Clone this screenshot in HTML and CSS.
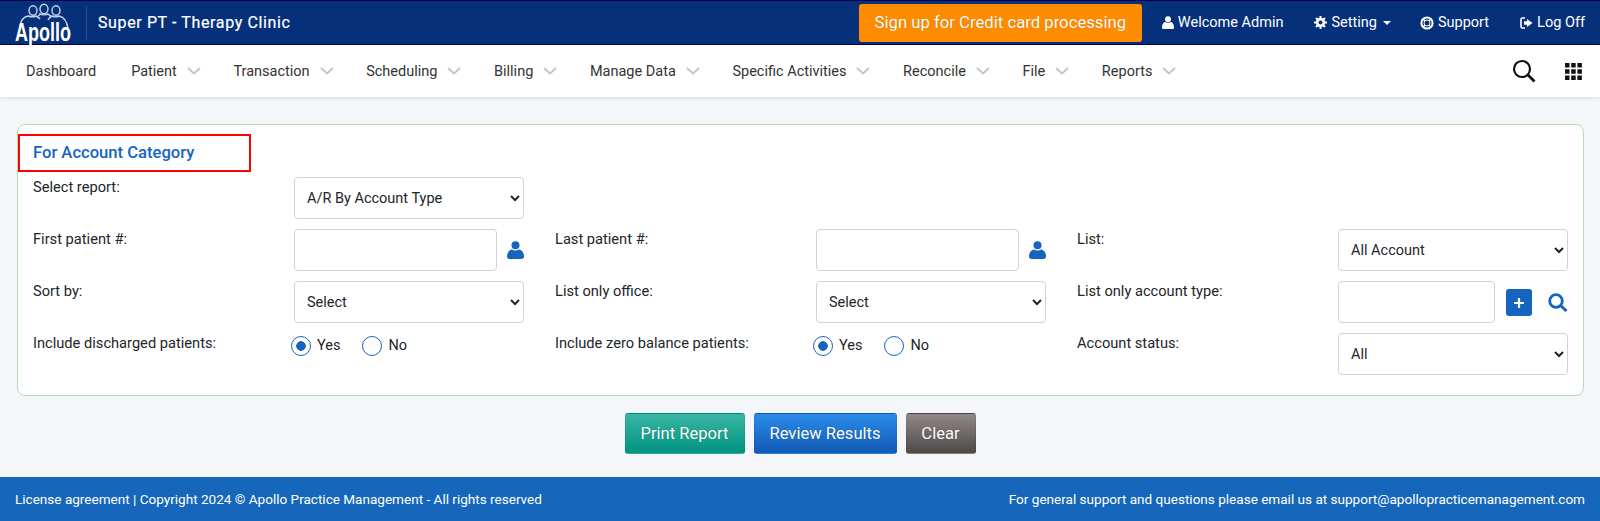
FILE: index.html
```html
<!DOCTYPE html>
<html lang="en">
<head>
<meta charset="utf-8">
<title>For Account Category</title>
<link rel="stylesheet" href="styles.css">
</head>
<body>
<header class="topbar">
  <div class="brand">
    <svg class="logo" width="58" height="43" viewBox="0 0 58 43">
      <g fill="none" stroke="#c9d6ea" stroke-width="1.4">
        <ellipse cx="18" cy="9.500" rx="4" ry="4.800"/>
        <ellipse cx="29" cy="8" rx="4" ry="4.800"/>
        <ellipse cx="41" cy="9.500" rx="4" ry="4.800"/>
        <path d="M5 28c0-8 3-12 8-13 3 1 6 1 8 0 2 1 3 2 4 3"/>
        <path d="M23 15c2-1 2-2 2-2 2 1 6 1 8 0 1 1 2 2 3 2"/>
        <path d="M33 19c1-2 2-3 4-4 2 1 5 1 7 0 5 1 8 5 9 13"/>
      </g>
      <text class="logo-text" x="0" y="40" textLength="56" lengthAdjust="spacingAndGlyphs">Apollo</text>
    </svg>
    <span class="clinic">Super PT - Therapy Clinic</span>
  </div>
  <div class="top-actions">
    <a class="cta">Sign up for Credit card processing</a>
    <a class="top-link top-welcome">
      <svg width="12" height="13" viewBox="0 0 12 13"><circle cx="6" cy="3.200" r="3" fill="#fff"/><path d="M1 13c-1 0-1-1-1-2 0-3 2-5 3-5 1 1 5 1 6 0 1 0 3 2 3 5 0 1 0 2-1 2z" fill="#fff"/></svg>
      Welcome Admin</a>
    <a class="top-link top-setting">
      <svg width="13" height="13" viewBox="0 0 13 13"><circle cx="6.500" cy="6.500" r="3.400" fill="none" stroke="#fff" stroke-width="2.600"/><path d="M6.500 0v13M0 6.500h13M2 2l9 9M11 2l-9 9" stroke="#fff" stroke-width="2"/><circle cx="6.500" cy="6.500" r="2" fill="#06317a"/></svg>
      Setting<span class="caret"></span></a>
    <a class="top-link top-support">
      <svg width="14" height="14" viewBox="0 0 14 14"><circle cx="7" cy="7" r="5.600" fill="none" stroke="#fff" stroke-width="2"/><circle cx="7" cy="7" r="3" fill="none" stroke="#fff" stroke-width="1"/><path d="M3 3l2 2M11 3L9 5M3 11l2-2M11 11L9 9" stroke="#fff" stroke-width="1.500"/></svg>
      Support</a>
    <a class="top-link top-logoff">
      <svg width="13" height="12" viewBox="0 0 13 12"><path d="M5 1H2.500C1.500 1 1 1.700 1 2.500v7C1 10.300 1.500 11 2.500 11H5" fill="none" stroke="#fff" stroke-width="1.600"/><path d="M7 2l5.500 4L7 10V7.700H4V4.300h3z" fill="#fff"/></svg>
      Log Off</a>
  </div>
</header>

<nav class="mainnav">
  <ul class="menu">
    <li class="menu-plain">Dashboard</li>
    <li>Patient<svg class="chev" width="14" height="8" viewBox="0 0 14 8"><path d="M1 1l6 5.500L13 1" /></svg></li>
    <li>Transaction<svg class="chev" width="14" height="8" viewBox="0 0 14 8"><path d="M1 1l6 5.500L13 1" /></svg></li>
    <li>Scheduling<svg class="chev" width="14" height="8" viewBox="0 0 14 8"><path d="M1 1l6 5.500L13 1" /></svg></li>
    <li>Billing<svg class="chev" width="14" height="8" viewBox="0 0 14 8"><path d="M1 1l6 5.500L13 1" /></svg></li>
    <li>Manage Data<svg class="chev" width="14" height="8" viewBox="0 0 14 8"><path d="M1 1l6 5.500L13 1" /></svg></li>
    <li>Specific Activities<svg class="chev" width="14" height="8" viewBox="0 0 14 8"><path d="M1 1l6 5.500L13 1" /></svg></li>
    <li>Reconcile<svg class="chev" width="14" height="8" viewBox="0 0 14 8"><path d="M1 1l6 5.500L13 1" /></svg></li>
    <li>File<svg class="chev" width="14" height="8" viewBox="0 0 14 8"><path d="M1 1l6 5.500L13 1" /></svg></li>
    <li>Reports<svg class="chev" width="14" height="8" viewBox="0 0 14 8"><path d="M1 1l6 5.500L13 1" /></svg></li>
  </ul>
  <div class="nav-tools">
    <svg width="24" height="24" viewBox="0 0 24 24"><circle cx="10" cy="10" r="8" fill="none" stroke="#111" stroke-width="2.200"/><path d="M16 16l6.500 6.500" stroke="#111" stroke-width="2.800"/></svg>
    <svg class="grid-icon" width="17" height="17" viewBox="0 0 17 17"><path fill="#111" d="M0 0h4.500v4.500H0zM6.200 0h4.500v4.500H6.200zM12.400 0h4.500v4.500h-4.500zM0 6.200h4.500v4.500H0zM6.200 6.200h4.500v4.500H6.200zM12.400 6.200h4.500v4.500h-4.500zM0 12.400h4.500v4.500H0zM6.200 12.400h4.500v4.500H6.200zM12.400 12.400h4.500v4.500h-4.500z"/></svg>
  </div>
</nav>

<main class="content">
  <section class="card">
    <h2 class="card-title">For Account Category</h2>
    <form class="form-grid">
      <label class="lbl">Select report:</label>
      <div class="ctl"><select class="field"><option>A/R By Account Type</option></select></div>
      <span class="empty"></span><span class="empty"></span><span class="empty"></span><span class="empty"></span>

      <label class="lbl">First patient #:</label>
      <div class="ctl">
        <input class="field field-person" type="text">
        <svg class="person" width="17" height="18" viewBox="0 0 17 18"><circle cx="8.500" cy="4.200" r="4" fill="#1565c0"/><path d="M0 15.500C0 11 3 8.500 5 8.500c2 1.200 5 1.200 7 0 2 0 5 2.500 5 7 0 1.500-1 2.500-2.500 2.500h-12C1 18 0 17 0 15.500z" fill="#1565c0"/></svg>
      </div>
      <label class="lbl">Last patient #:</label>
      <div class="ctl">
        <input class="field field-person" type="text">
        <svg class="person" width="17" height="18" viewBox="0 0 17 18"><circle cx="8.500" cy="4.200" r="4" fill="#1565c0"/><path d="M0 15.500C0 11 3 8.500 5 8.500c2 1.200 5 1.200 7 0 2 0 5 2.500 5 7 0 1.500-1 2.500-2.500 2.500h-12C1 18 0 17 0 15.500z" fill="#1565c0"/></svg>
      </div>
      <label class="lbl">List:</label>
      <div class="ctl"><select class="field"><option>All Account</option></select></div>

      <label class="lbl">Sort by:</label>
      <div class="ctl"><select class="field"><option>Select</option></select></div>
      <label class="lbl">List only office:</label>
      <div class="ctl"><select class="field"><option>Select</option></select></div>
      <label class="lbl">List only account type:</label>
      <div class="ctl">
        <input class="field field-type" type="text">
        <button class="plus" type="button"><svg width="12" height="12" viewBox="0 0 12 12"><path d="M6 1v10M1 6h10" stroke="#fff" stroke-width="2.200"/></svg></button>
        <svg class="find" width="20" height="19" viewBox="0 0 20 19"><circle cx="8" cy="8" r="6.300" fill="none" stroke="#1565c0" stroke-width="2.800"/><path d="M12.500 12.500l6 5.500" stroke="#1565c0" stroke-width="3"/></svg>
      </div>

      <label class="lbl">Include discharged patients:</label>
      <div class="ctl radios">
        <label class="radio"><input type="radio" name="dis" checked>Yes</label>
        <label class="radio"><input type="radio" name="dis">No</label>
      </div>
      <label class="lbl">Include zero balance patients:</label>
      <div class="ctl radios">
        <label class="radio"><input type="radio" name="zero" checked>Yes</label>
        <label class="radio"><input type="radio" name="zero">No</label>
      </div>
      <label class="lbl">Account status:</label>
      <div class="ctl"><select class="field"><option>All</option></select></div>
    </form>
  </section>
  <div class="actions">
    <button class="btn btn-print" type="button">Print Report</button>
    <button class="btn btn-review" type="button">Review Results</button>
    <button class="btn btn-clear" type="button">Clear</button>
  </div>
</main>

<footer class="footer">
  <span>License agreement | Copyright 2024 © Apollo Practice Management - All rights reserved</span>
  <span>For general support and questions please email us at support@apollopracticemanagement.com</span>
</footer>
</body>
</html>
```
FILE: styles.css
```css
* { box-sizing: border-box; }
html, body { margin: 0; padding: 0; }
body {
  background: #f4f6f9;
  font-family: Roboto, "Liberation Sans", sans-serif;
  font-size: 14px;
  color: #212529;
  height: 521px;
  overflow: hidden;
}

/* top bar */
.topbar {
  height: 45px;
  background: #06317a;
  border-top: 1px solid #00004d;
  border-bottom: 1px solid #00004d;
  display: flex;
  align-items: center;
  justify-content: space-between;
}
.brand { display: flex; align-items: center; padding-left: 15px; }
.logo { display: block; overflow: visible; }
.logo-text {
  font-family: "Liberation Sans", sans-serif;
  font-weight: 700;
  font-size: 25px;
  fill: #fff;
}
.clinic {
  margin-left: 13px;
  padding-left: 11px;
  border-left: 1px solid #2a4f8e;
  height: 34px;
  line-height: 33px;
  color: #fff;
  font-size: 16px;
  letter-spacing: 0.62px;
  -webkit-text-stroke: 0.2px #fff;
}
.top-actions { display: flex; align-items: center; height: 100%; }
.cta {
  width: 283px;
  height: 38px;
  line-height: 38px;
  text-align: center;
  background: #ff8c00;
  border-radius: 3px;
  color: #fff;
  font-size: 16.7px;
  text-shadow: 0 0 1px rgba(0,0,0,.3);
}
.top-link {
  display: flex;
  align-items: center;
  gap: 4px;
  color: #fff;
  font-size: 14.5px;
  white-space: nowrap;
}
.top-welcome { margin-left: 20px; }
.top-setting { margin-left: 31px; }
.top-support { margin-left: 29px; }
.top-logoff { margin-left: 31px; margin-right: 15px; }
.caret {
  width: 0;
  height: 0;
  margin-left: 2px;
  border-left: 4px solid transparent;
  border-right: 4px solid transparent;
  border-top: 4px solid #fff;
}

/* main nav */
.mainnav {
  height: 52px;
  background: #fff;
  box-shadow: 0 1px 4px rgba(0,0,0,.12);
  display: flex;
  align-items: center;
  justify-content: space-between;
  padding: 0 18px 0 26px;
}
.menu {
  list-style: none;
  margin: 0;
  padding: 0;
  display: flex;
  align-items: center;
  font-size: 14.5px;
  color: #333;
}
.menu li { display: flex; align-items: center; margin-right: 32.6px; white-space: nowrap; }
.menu .menu-plain { margin-right: 35px; }
.chev { margin-left: 10px; fill: none; stroke: #c6c6be; stroke-width: 2; }
.nav-tools { display: flex; align-items: center; gap: 29px; }
.grid-icon { display: block; }

/* card */
.content { padding: 27px 16px 0 17px; }
.card {
  height: 272px;
  background: #fff;
  border: 1px solid #b7dcb2;
  border-radius: 8px;
  padding-top: 9px;
}
.card-title {
  width: 233px;
  height: 38px;
  margin: 0 0 5px;
  padding-left: 13px;
  border: 2px solid #f00;
  color: #1565c0;
  font-size: 16.6px;
  font-weight: 500;
  line-height: 33px;
}
.form-grid {
  display: grid;
  grid-template-columns: repeat(5, 261px) 230px;
  grid-auto-rows: 42px;
  row-gap: 10px;
  padding-left: 15px;
}
.lbl { padding-top: 1px; line-height: 18px; font-size: 14.65px; color: #212529; }
.ctl { display: flex; align-items: center; width: 230px; }
.field {
  width: 100%;
  height: 42px;
  padding: 0 8px;
  background: #fff;
  border: 1px solid #d3d3d3;
  border-radius: 4px;
  font-family: Roboto, "Liberation Sans", sans-serif;
  font-size: 14.5px;
  color: #212529;
}
.field-person { width: 204px; }
.field-type { width: 157px; }
.person { margin-left: 10px; margin-top: -1px; flex: none; }
.plus {
  width: 26px;
  height: 27px;
  margin-left: 11px;
  padding: 0;
  border: 0;
  border-radius: 3px;
  background: #1565c0;
  display: flex;
  align-items: center;
  justify-content: center;
  flex: none;
  margin-top: 1px;
}
.find { margin-left: 16px; flex: none; margin-top: 1px; }

/* radios */
.radios { align-items: flex-start; padding-top: 3px; margin-left: -3px; gap: 22px; }
.radio { display: flex; align-items: center; gap: 6px; font-size: 14.5px; line-height: 20px; }
.radio input {
  appearance: none;
  width: 20px;
  height: 20px;
  margin: 0;
  border: 1.5px solid #1565c0;
  border-radius: 50%;
  background: #fff;
}
.radio input:checked { background: radial-gradient(circle, #1565c0 0 4.5px, #fff 5px); }

/* buttons */
.actions { display: flex; justify-content: center; gap: 9px; margin-top: 17px; padding-right: 1px; }
.btn {
  height: 41px;
  padding: 0;
  border: 1px solid rgba(0,0,0,.05);
  border-radius: 3px;
  color: #fff;
  font-family: Roboto, "Liberation Sans", sans-serif;
  font-size: 16.6px;
  text-shadow: 0 0 1px rgba(0,0,0,.35);
}
.btn-print { width: 120px; background: linear-gradient(#3ab5a4, #009481); }
.btn-review { width: 143px; background: linear-gradient(#2b8beb, #115bb4); }
.btn-clear { width: 70px; background: linear-gradient(#8f8887, #4e4a4a); }

/* footer */
.footer {
  height: 44px;
  margin-top: 23px;
  padding: 0 15px 1px 15px;
  background: #1667bb;
  color: #fff;
  font-size: 13.55px;
  display: flex;
  align-items: center;
  justify-content: space-between;
}
```
